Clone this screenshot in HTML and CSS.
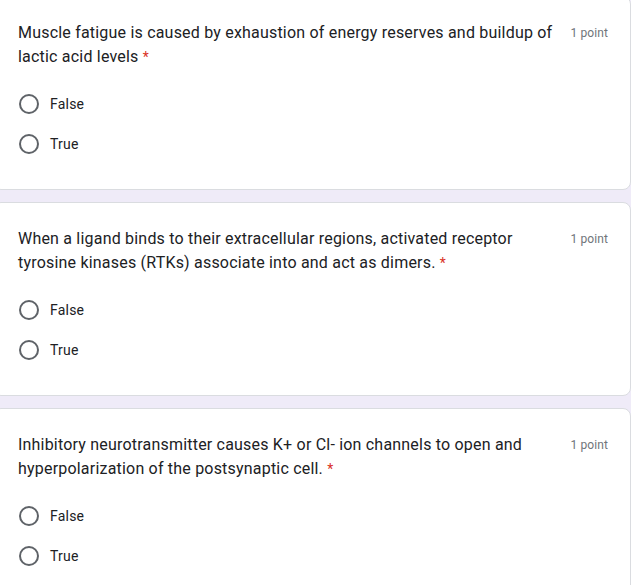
FILE: index.html
```html
<!DOCTYPE html>
<html>
<head>
<meta charset="utf-8">
<link rel="stylesheet" href="styles.css">
</head>
<body>
<div class="list">
  <div class="card">
    <div class="head">
      <div class="title">Muscle fatigue is caused by exhaustion of energy reserves and buildup of lactic acid levels <span class="req">*</span></div>
      <div class="points">1 point</div>
    </div>
    <div class="options">
      <div class="opt"><span class="radio"></span><span class="label">False</span></div>
      <div class="opt"><span class="radio"></span><span class="label">True</span></div>
    </div>
  </div>
  <div class="card">
    <div class="head">
      <div class="title">When a ligand binds to their extracellular regions, activated receptor tyrosine kinases (RTKs) associate into and act as dimers. <span class="req">*</span></div>
      <div class="points">1 point</div>
    </div>
    <div class="options">
      <div class="opt"><span class="radio"></span><span class="label">False</span></div>
      <div class="opt"><span class="radio"></span><span class="label">True</span></div>
    </div>
  </div>
  <div class="card">
    <div class="head">
      <div class="title">Inhibitory neurotransmitter causes K+ or Cl- ion channels to open and hyperpolarization of the postsynaptic cell. <span class="req">*</span></div>
      <div class="points">1 point</div>
    </div>
    <div class="options">
      <div class="opt"><span class="radio"></span><span class="label">False</span></div>
      <div class="opt"><span class="radio"></span><span class="label">True</span></div>
    </div>
  </div>
</div>
</body>
</html>
```

FILE: styles.css
```css
html, body {
  margin: 0;
  padding: 0;
  background: #efebf8;
  overflow: hidden;
}
body {
  font-family: Roboto, "Liberation Sans", Arial, sans-serif;
  color: #202124;
}
.list {
  margin-top: -4px;
  margin-left: -7px;
  width: calc(100% + 7px);
  display: flex;
  flex-direction: column;
  gap: 12px;
}
.card {
  background: #fff;
  border: 1px solid #dadce0;
  border-radius: 8px;
  padding: 24px 22px 25px 24px;
}
.head {
  display: flex;
  align-items: flex-start;
}
.title {
  flex: 1;
  font-size: 16px;
  line-height: 24px;
  letter-spacing: 0.2px;
  padding-right: 18px;
}
.req {
  color: #d93025;
  font-size: 14px;
}
.points {
  font-size: 12px;
  line-height: 24px;
  color: #70757a;
  white-space: nowrap;
  letter-spacing: 0.1px;
}
.options {
  margin-top: 15px;
  display: flex;
  flex-direction: column;
}
.opt {
  height: 40px;
  display: flex;
  align-items: center;
}
.radio {
  box-sizing: border-box;
  width: 20px;
  height: 20px;
  margin-left: 1px;
  border: 2px solid #5f6368;
  border-radius: 50%;
  flex: none;
}
.label {
  margin-left: 11px;
  font-size: 14px;
  letter-spacing: 0.2px;
}
```
